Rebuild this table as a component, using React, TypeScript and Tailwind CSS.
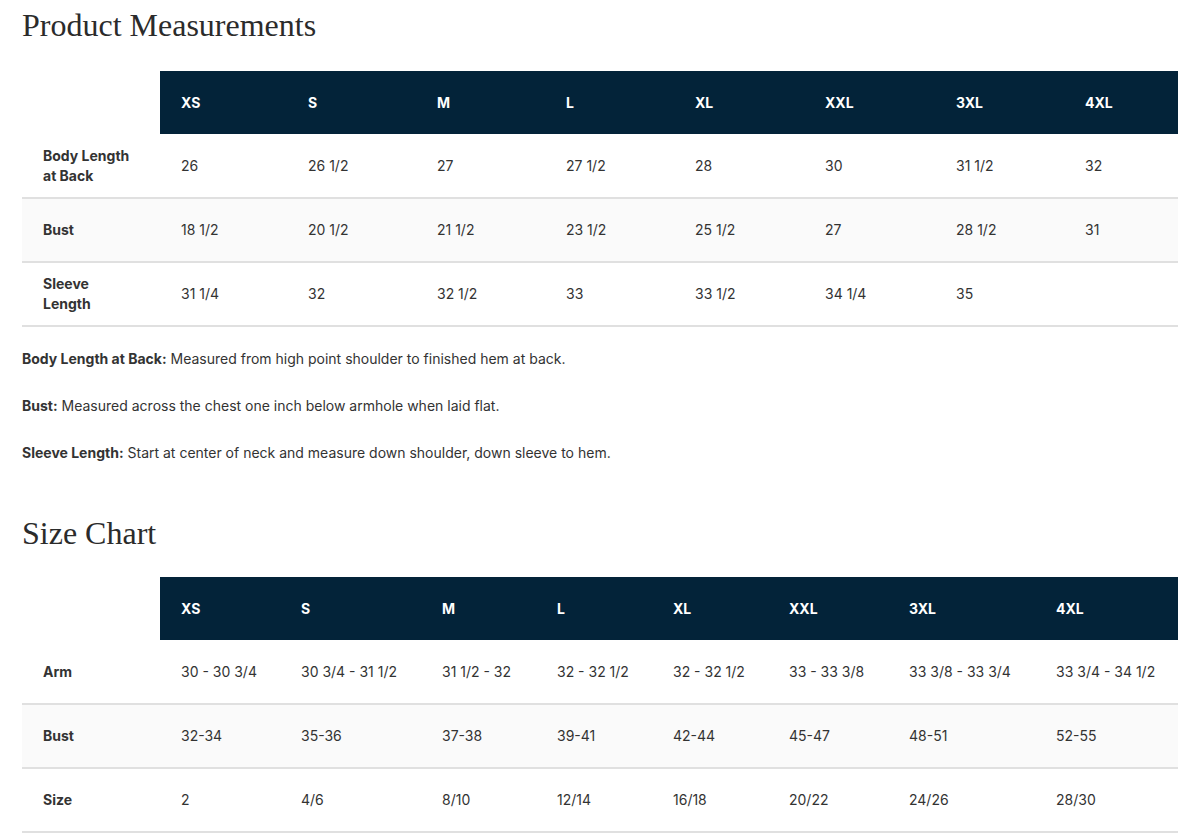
const sizes = ["XS", "S", "M", "L", "XL", "XXL", "3XL", "4XL"];

const measureCols = ["w-[138px]", "w-[127px]", "w-[129px]", "w-[129px]", "w-[129px]", "w-[130px]", "w-[131px]", "w-[129px]", "w-[114px]"];
const chartCols = ["w-[138px]", "w-[120px]", "w-[141px]", "w-[115px]", "w-[116px]", "w-[116px]", "w-[120px]", "w-[147px]", "w-[143px]"];

const measureRows = [
  { label: "Body Length at Back", values: ["26", "26 1/2", "27", "27 1/2", "28", "30", "31 1/2", "32"] },
  { label: "Bust", values: ["18 1/2", "20 1/2", "21 1/2", "23 1/2", "25 1/2", "27", "28 1/2", "31"] },
  { label: "Sleeve Length", values: ["31 1/4", "32", "32 1/2", "33", "33 1/2", "34 1/4", "35", ""] },
];

const chartRows = [
  { label: "Arm", values: ["30 - 30 3/4", "30 3/4 - 31 1/2", "31 1/2 - 32", "32 - 32 1/2", "32 - 32 1/2", "33 - 33 3/8", "33 3/8 - 33 3/4", "33 3/4 - 34 1/2"] },
  { label: "Bust", values: ["32-34", "35-36", "37-38", "39-41", "42-44", "45-47", "48-51", "52-55"] },
  { label: "Size", values: ["2", "4/6", "8/10", "12/14", "16/18", "20/22", "24/26", "28/30"] },
];

interface Row {
  label: string;
  values: string[];
}

const SizeTable = ({ cols, rows }: { cols: string[]; rows: Row[] }) => {
  return (
    <table className="w-[1156px] table-fixed border-collapse text-[14px] text-[#333]">
      <colgroup>
        {cols.map((c, i) => (
          <col key={i} className={c} />
        ))}
      </colgroup>
      <thead>
        <tr className="h-[63px]">
          <th className="bg-white"></th>
          {sizes.map((s) => (
            <th key={s} className="bg-[#032339] px-[21px] text-left font-bold text-white">
              {s}
            </th>
          ))}
        </tr>
      </thead>
      <tbody>
        {rows.map((row, i) => (
          <tr key={row.label} className={`h-[64px] border-b-2 border-[#e0e0e0] ${i === 1 ? "bg-[#fafafa]" : "bg-white"}`}>
            <td className="px-[21px] font-bold leading-[20px]">{row.label}</td>
            {row.values.map((v, j) => (
              <td key={j} className="px-[21px] leading-[20px] whitespace-nowrap">
                {v}
              </td>
            ))}
          </tr>
        ))}
      </tbody>
    </table>
  );
};

export default function App() {
  return (
    <div className="min-h-[838px] bg-white px-[22px] font-['Inter',sans-serif] text-[#333]">
      <h2 className="pt-[5px] font-['Liberation_Serif',serif] text-[32px] leading-[40px] text-[#2b2b2b]">
        Product Measurements
      </h2>
      <div className="mt-[26px]">
        <SizeTable cols={measureCols} rows={measureRows} />
      </div>
      <div className="mt-[22px] flex flex-col gap-[27px] text-[14px] leading-[20px]">
        <p>
          <span className="font-bold">Body Length at Back:</span> Measured from high point shoulder to finished hem at back.
        </p>
        <p>
          <span className="font-bold">Bust:</span> Measured across the chest one inch below armhole when laid flat.
        </p>
        <p>
          <span className="font-bold">Sleeve Length:</span> Start at center of neck and measure down shoulder, down sleeve to hem.
        </p>
      </div>
      <h2 className="mt-[50px] font-['Liberation_Serif',serif] text-[32px] leading-[40px] text-[#2b2b2b]">
        Size Chart
      </h2>
      <div className="mt-[24px]">
        <SizeTable cols={chartCols} rows={chartRows} />
      </div>
    </div>
  );
}
